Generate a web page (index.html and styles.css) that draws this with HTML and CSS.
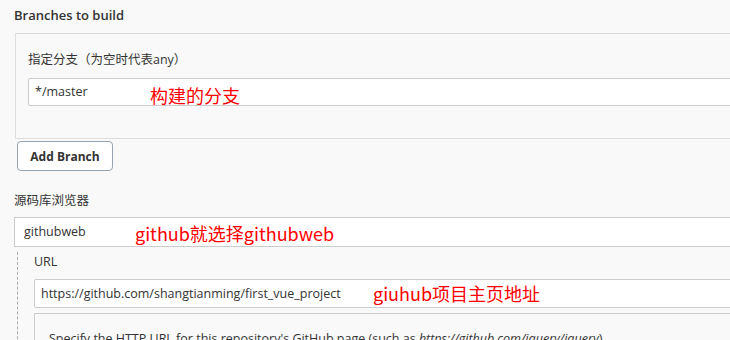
FILE: index.html
```html
<!DOCTYPE html>
<html>
  <head>
    <title>Branches to build</title>
    <link rel="stylesheet" href="styles.css">
  </head>
  <body>
    <div class="page">
      <div class="section-title">Branches to build</div>
      <div class="repeat-panel">
        <div class="field-label">指定分支（为空时代表any）</div>
        <div class="text-input">*/master<span class="note note-branch">构建的分支</span></div>
      </div>
      <button class="add-btn">Add Branch</button>
      <div class="field-label">源码库浏览器</div>
      <div class="select-box">githubweb<span class="note note-browser">github就选择githubweb</span></div>
      <div class="nested">
        <div class="field-label">URL</div>
        <div class="text-input url-input">https://github.com/shangtianming/first_vue_project<span class="note note-url">giuhub项目主页地址</span></div>
        <div class="help">Specify the HTTP URL for this repository's GitHub page (such as <i>https://github.com/jquery/jquery</i>).</div>
      </div>
    </div>
  </body>
</html>
```

FILE: styles.css
```css
body {
  margin: 0;
  background: #f9f9f9;
  font-family: "Open Sans", "Noto Sans CJK SC", sans-serif;
  font-size: 12.5px;
  color: #333;
  overflow: hidden;
}
.page {
  width: 780px;
  padding: 6px 0 0 14px;
}
.section-title {
  font-weight: 600;
  font-size: 13px;
  line-height: 18px;
}
.repeat-panel {
  margin: 9px 0 0 1px;
  padding: 17px 0 32px 12px;
  border: 1px solid #ddd;
}
.field-label {
  line-height: 18px;
}
.text-input {
  position: relative;
  margin-top: 9px;
  height: 26px;
  line-height: 26px;
  padding-left: 6px;
  background: #fff;
  border: 1px solid #ccc;
  border-radius: 2px;
}
.add-btn {
  display: block;
  margin: 2px 0 21px 3px;
  width: 96px;
  height: 30px;
  background: #fff;
  border: 1px solid #95a3b0;
  border-radius: 4px;
  font-family: "Open Sans", sans-serif;
  font-size: 12px;
  font-weight: 700;
  color: #333;
}
.select-box {
  position: relative;
  margin-top: 7px;
  height: 28px;
  line-height: 28px;
  padding-left: 9px;
  background: #fff;
  border: 1px solid #ccc;
}
.nested {
  margin: 5px 0 0 3px;
  padding: 1px 0 0 16px;
  border-left: 1px dashed #aaa;
}
.url-input {
  margin-top: 8px;
  height: 27px;
  line-height: 27px;
}
.help {
  margin-top: 5px;
  padding: 16px 14px;
  border: 1px solid #ccc;
  background: #f9f9f9;
}
.note {
  position: absolute;
  top: 6px;
  font-family: "Noto Sans CJK SC", sans-serif;
  font-size: 18px;
  line-height: 20px;
  color: #f00;
}
.note-branch {
  left: 121px;
}
.note-browser {
  left: 120px;
  top: 5px;
}
.note-url {
  left: 338px;
  top: 3px;
}
```
